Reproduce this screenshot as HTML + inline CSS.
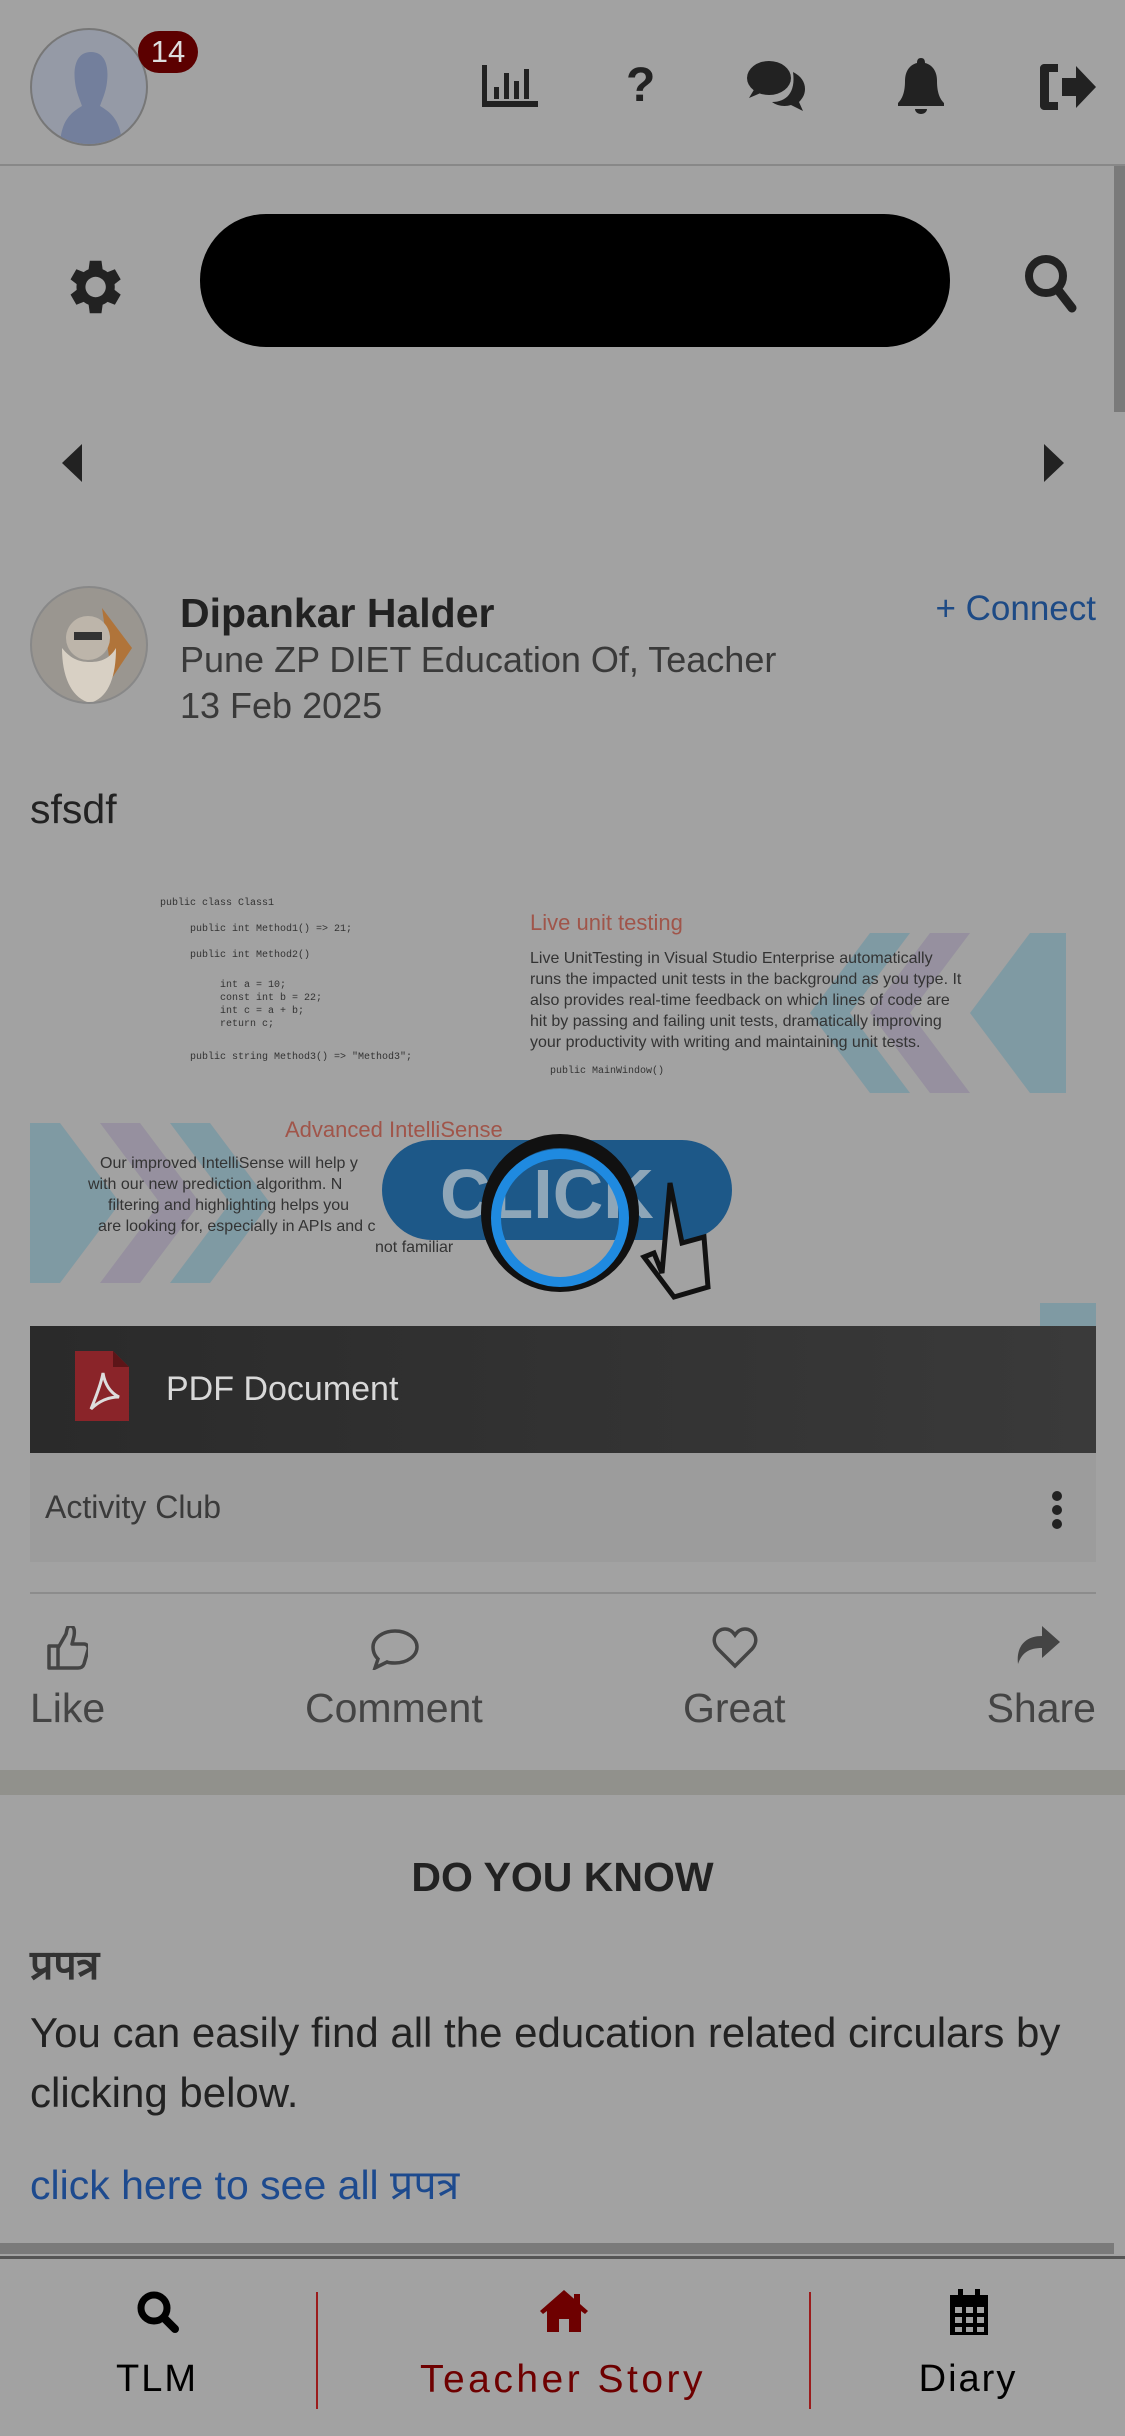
<!DOCTYPE html>
<html><head><meta charset="utf-8"><style>
*{margin:0;padding:0;box-sizing:border-box}
body{width:1125px;height:2436px;background:#a2a2a2;font-family:"Liberation Sans","Noto Sans CJK SC",sans-serif;position:relative;overflow:hidden;color:#222}
.a{position:absolute}
.ic{fill:#222}
.t{white-space:nowrap}
</style></head><body>
<!-- header -->
<div class="a" style="left:30px;top:28px;width:118px;height:118px;border-radius:50%;border:2px solid #777;background:#959aa6;overflow:hidden">
<svg width="118" height="118" viewBox="0 0 118 118"><path d="M59 22c-14 0-18 14-16 30 1 10 5 18 7 24-10 6-22 14-22 42h62c0-28-12-36-22-42 2-6 6-14 7-24 2-16-2-30-16-30z" fill="#737f9c"/></svg></div>
<div class="a t" style="left:138px;top:31px;width:60px;height:42px;border-radius:21px;background:#5c0000;color:#ddd;font-size:31px;text-align:center;line-height:42px">14</div>
<svg class="a" style="left:482px;top:65px" width="56" height="42" viewBox="0 0 56 42"><path class="ic" d="M0 0h5v36h51v6H0z M12 22h5v12h-5z M22 8h5v26h-5z M32 16h5v18h-5z M42 4h5v30h-5z"/></svg>
<div class="a t" style="left:626px;top:58px;font-size:48px;font-weight:bold;color:#222">?</div>
<svg class="a" style="left:745px;top:60px" width="62" height="52" viewBox="0 0 62 52"><ellipse class="ic" cx="24" cy="18" rx="22" ry="17"/><path class="ic" d="M4 38l6-10 8 4z"/><path class="ic" d="M48 12c8 4 12 10 12 17 0 6-3 10-6 13l4 9-12-6c-6 2-14 1-19-3 14 0 24-9 21-30z"/></svg>
<svg class="a" style="left:898px;top:58px" width="46" height="56" viewBox="0 0 46 56"><path class="ic" d="M23 0c3 0 4 2 4 5 8 2 12 9 12 18 0 12 3 18 7 22v3H0v-3c4-4 7-10 7-22 0-9 4-16 12-18 0-3 1-5 4-5z M17 51h12c0 3-3 5-6 5s-6-2-6-5z"/></svg>
<svg class="a" style="left:1040px;top:64px" width="56" height="46" viewBox="0 0 56 46"><path class="ic" d="M18 0v8H9v30h9v8H4c-2 0-4-2-4-4V4c0-2 2-4 4-4z M22 14h14V2l20 21-20 21V32H22z"/></svg>
<div class="a" style="left:0;top:164px;width:1125px;height:2px;background:#888"></div>
<div class="a" style="left:1114px;top:166px;width:11px;height:246px;background:#7a7a7a"></div>
<!-- search row -->
<svg class="a" style="left:58px;top:252px" width="70" height="70" viewBox="0 0 24 24"><path class="ic" d="M19.4 13a7.5 7.5 0 0 0 0-2l2.1-1.6-2-3.5-2.5 1a7 7 0 0 0-1.7-1L14.9 3h-4l-.4 2.9a7 7 0 0 0-1.7 1l-2.5-1-2 3.5L6.4 11a7.5 7.5 0 0 0 0 2l-2.1 1.6 2 3.5 2.5-1a7 7 0 0 0 1.7 1l.4 2.9h4l.4-2.9a7 7 0 0 0 1.7-1l2.5 1 2-3.5zM12.9 15.5a3.5 3.5 0 1 1 0-7 3.5 3.5 0 0 1 0 7z"/></svg>
<div class="a" style="left:200px;top:214px;width:750px;height:133px;border-radius:66px;background:#000"></div>
<svg class="a" style="left:1022px;top:252px" width="60" height="62" viewBox="0 0 60 62"><circle cx="24" cy="24" r="17" fill="none" stroke="#222" stroke-width="8"/><path d="M36 38l14 18" stroke="#222" stroke-width="9" stroke-linecap="round"/></svg>
<svg class="a" style="left:62px;top:444px" width="22" height="38"><path class="ic" d="M20 0v38L0 19z"/></svg>
<svg class="a" style="left:1042px;top:444px" width="22" height="38"><path class="ic" d="M2 0v38l20-19z"/></svg>
<!-- post header -->
<div class="a" style="left:30px;top:586px;width:118px;height:118px;border-radius:50%;background:#9a9690;border:2px solid #888;overflow:hidden">
<svg width="118" height="118"><path d="M70 20l30 40-20 30z" fill="#b0743a"/><circle cx="56" cy="50" r="22" fill="#bdb5aa"/><path d="M30 60c0 30 10 50 28 55 18-5 26-25 26-55-6 10-14 14-26 14s-20-4-28-14z" fill="#d8d0c4"/><rect x="42" y="44" width="28" height="8" fill="#333"/></svg></div>
<div class="a t" style="left:180px;top:590px;font-size:41px;font-weight:bold;color:#222">Dipankar Halder</div>
<div class="a t" style="left:180px;top:639px;font-size:36px;color:#3a3a3a">Pune ZP DIET Education Of, Teacher</div>
<div class="a t" style="left:180px;top:685px;font-size:36px;color:#3a3a3a">13 Feb 2025</div>
<div class="a t" style="right:29px;top:589px;font-size:35px;color:#1d4a85">+ Connect</div>
<div class="a t" style="left:30px;top:786px;font-size:41px;color:#222">sfsdf</div>
<!-- image -->
<div class="a" style="left:30px;top:873px;width:1066px;height:580px;background:#a2a2a2;overflow:hidden">
<svg class="a" style="left:0;top:0" width="1066" height="580">
<g fill="#7f9aa3"><path d="M840 60h40l-60 80 60 80h-40l-60-80z"/><path d="M1000 60h36v160h-36l-60-80z"/><path d="M0 250h30l60 80-60 80H0z M140 250h40l60 80-60 80h-40l60-80z"/><path d="M1010 430h56v30h-56z"/></g>
<g fill="#96909f"><path d="M900 60h40l-60 80 60 80h-40l-60-80z"/><path d="M70 250h40l60 80-60 80H70l60-80z"/></g>
<g font-family="Liberation Mono,monospace" font-size="10" fill="#333"><text x="130" y="32">public class Class1</text><text x="160" y="58">public int Method1() =&gt; 21;</text><text x="160" y="84">public int Method2()</text><text x="190" y="114">int a = 10;</text><text x="190" y="127">const int b = 22;</text><text x="190" y="140">int c = a + b;</text><text x="190" y="153">return c;</text><text x="160" y="186">public string Method3() =&gt; "Method3";</text><text x="520" y="200">public MainWindow()</text></g>
<text x="500" y="57" font-size="22" fill="#a0554a">Live unit testing</text>
<g font-size="16" fill="#333"><text x="500" y="90">Live UnitTesting in Visual Studio Enterprise automatically</text><text x="500" y="111">runs the impacted unit tests in the background as you type. It</text><text x="500" y="132">also provides real-time feedback on which lines of code are</text><text x="500" y="153">hit by passing and failing unit tests, dramatically improving</text><text x="500" y="174">your productivity with writing and maintaining unit tests.</text></g>
<text x="255" y="264" font-size="22" fill="#a0554a">Advanced IntelliSense</text>
<g font-size="16" fill="#333"><text x="70" y="295">Our improved IntelliSense will help y</text><text x="58" y="316">with our new prediction algorithm. N</text><text x="78" y="337">filtering and highlighting helps you</text><text x="68" y="358">are looking for, especially in APIs and c</text><text x="345" y="379">not familiar</text></g>
<rect x="352" y="267" width="350" height="100" rx="50" fill="#1d5888"/>
<text x="410" y="345" font-size="70" font-weight="bold" fill="#8ea6b8">CLICK</text>
<circle cx="530" cy="340" r="72" fill="none" stroke="#111" stroke-width="14"/>
<circle cx="530" cy="345" r="64" fill="none" stroke="#1f8ae0" stroke-width="10"/>
<path d="M640 310l12 60 22-6 4 50-34 10-30-40 10-4 8 20z" fill="#a2a2a2" stroke="#111" stroke-width="5"/>
</svg>
<div class="a" style="left:0;top:453px;width:1066px;height:127px;background:linear-gradient(90deg,#2a2a2a,#353535 70%,#3a3a3a)"></div>
<svg class="a" style="left:45px;top:478px" width="54" height="70" viewBox="0 0 54 70"><path d="M0 0h38l16 16v54H0z" fill="#8a2429"/><path d="M38 0v16h16z" fill="#5c1518"/><path d="M16 58c4-10 10-24 12-36 2 12 8 20 16 24-10 0-20 4-28 12z" fill="none" stroke="#ddd" stroke-width="3"/></svg>
<div class="a t" style="left:136px;top:497px;font-size:34px;color:#d8d8d8">PDF Document</div>
</div>
<div class="a" style="left:30px;top:1453px;width:1066px;height:109px;background:#9c9c9c"></div>
<div class="a t" style="left:45px;top:1489px;font-size:32px;color:#3a3a3a">Activity Club</div>
<svg class="a" style="left:1050px;top:1490px" width="14" height="40"><circle cx="7" cy="6" r="5" fill="#222"/><circle cx="7" cy="20" r="5" fill="#222"/><circle cx="7" cy="34" r="5" fill="#222"/></svg>
<div class="a" style="left:30px;top:1592px;width:1066px;height:2px;background:#8c8c8c"></div>
<!-- actions -->
<svg class="a" style="left:46px;top:1626px" width="42" height="44" viewBox="0 0 42 44"><path d="M3 20h9v22H3z M12 22l8-14c1-4 1-8 4-8 4 0 5 4 4 10l-2 8h12c3 0 5 3 4 6l-4 14c-1 3-3 4-6 4H12z" fill="none" stroke="#444" stroke-width="3.5" stroke-linejoin="round"/></svg>
<svg class="a" style="left:370px;top:1628px" width="50" height="42" viewBox="0 0 50 42"><path d="M25 3c12 0 22 7 22 16s-10 16-22 16c-3 0-6 0-8-1l-12 6 3-9C5 28 3 24 3 19 3 10 13 3 25 3z" fill="none" stroke="#444" stroke-width="3.5"/></svg>
<svg class="a" style="left:712px;top:1626px" width="46" height="44" viewBox="0 0 46 44"><path d="M23 40L6 23C-2 14 4 3 13 3c5 0 8 3 10 6 2-3 5-6 10-6 9 0 15 11 7 20z" fill="none" stroke="#444" stroke-width="3.5"/></svg>
<svg class="a" style="left:1016px;top:1626px" width="44" height="40" viewBox="0 0 44 40"><path d="M26 0l18 16-18 16V22C14 22 6 26 2 38 0 22 8 10 26 10z" fill="#444"/></svg>
<div class="a t" style="left:30px;top:1685px;font-size:41px;color:#444">Like</div>
<div class="a t" style="left:305px;top:1685px;font-size:41px;color:#444">Comment</div>
<div class="a t" style="left:683px;top:1685px;font-size:41px;color:#444">Great</div>
<div class="a t" style="right:29px;top:1685px;font-size:41px;color:#444">Share</div>
<div class="a" style="left:0;top:1770px;width:1125px;height:25px;background:#91918c"></div>
<!-- do you know -->
<div class="a t" style="left:0;width:1125px;text-align:center;top:1854px;font-size:41px;font-weight:bold;color:#222">DO YOU KNOW</div>
<div class="a t" style="left:30px;top:1936px;font-size:41px;font-weight:bold;color:#333">प्रपत्र</div>
<div class="a" style="left:30px;top:2003px;width:1080px;font-size:42px;line-height:60px;color:#222">You can easily find all the education related circulars by clicking below.</div>
<div class="a t" style="left:30px;top:2156px;font-size:41px;color:#1d4a8e">click here to see all प्रपत्र</div>
<div class="a" style="left:0;top:2243px;width:1114px;height:11px;background:#7a7a7a"></div>
<div class="a" style="left:0;top:2256px;width:1125px;height:3px;background:#555"></div>
<!-- bottom nav -->
<svg class="a" style="left:136px;top:2290px" width="44" height="44" viewBox="0 0 44 44"><circle cx="18" cy="18" r="13" fill="none" stroke="#000" stroke-width="7"/><path d="M28 28l11 11" stroke="#000" stroke-width="8" stroke-linecap="round"/></svg>
<svg class="a" style="left:540px;top:2290px" width="48" height="42" viewBox="0 0 48 42"><path d="M24 0l24 21-3 3-4-3v21H29V29H19v13H7V21l-4 3-3-3z M34 4h6v10l-6-5z" fill="#6e0000"/></svg>
<svg class="a" style="left:950px;top:2289px" width="38" height="46" viewBox="0 0 38 46"><path d="M8 0h5v6h12V0h5v6h8v40H0V6h8z" fill="#000"/><g fill="#a2a2a2"><rect x="5" y="18" width="7" height="6"/><rect x="16" y="18" width="7" height="6"/><rect x="27" y="18" width="7" height="6"/><rect x="5" y="28" width="7" height="6"/><rect x="16" y="28" width="7" height="6"/><rect x="27" y="28" width="7" height="6"/><rect x="5" y="38" width="7" height="5"/><rect x="16" y="38" width="7" height="5"/><rect x="27" y="38" width="7" height="5"/></g></svg>
<div class="a" style="left:316px;top:2292px;width:2px;height:117px;background:#9b1c1c"></div>
<div class="a" style="left:809px;top:2292px;width:2px;height:117px;background:#9b1c1c"></div>
<div class="a t" style="left:57px;width:200px;text-align:center;top:2358px;font-size:38px;color:#000;letter-spacing:2px">TLM</div>
<div class="a t" style="left:313px;width:500px;text-align:center;top:2358px;font-size:39px;color:#6e0000;letter-spacing:3.5px">Teacher Story</div>
<div class="a t" style="left:868px;width:200px;text-align:center;top:2358px;font-size:38px;color:#000;letter-spacing:2px">Diary</div>
</body></html>
